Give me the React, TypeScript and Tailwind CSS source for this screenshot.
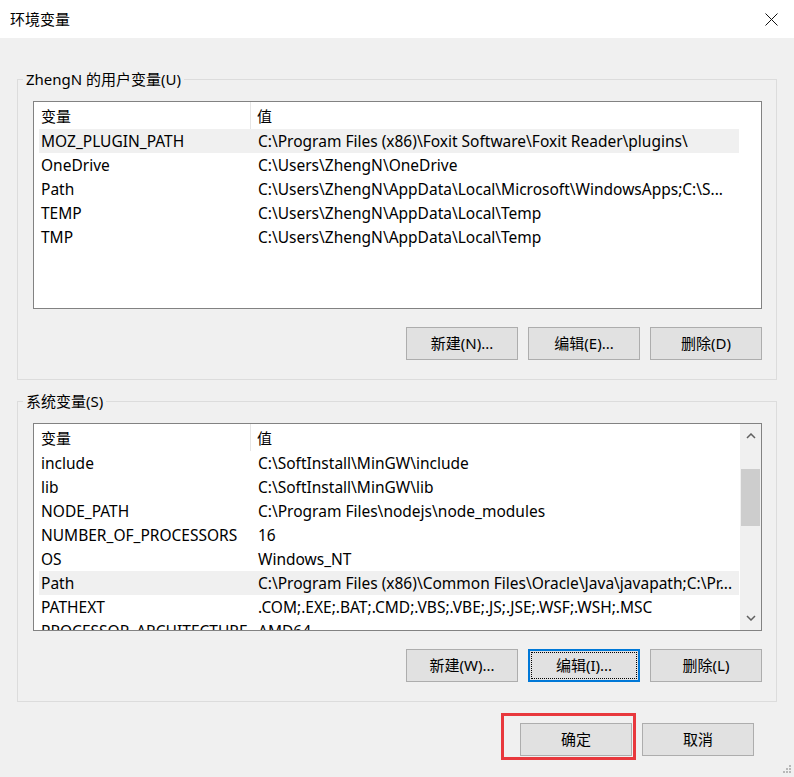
import React from 'react';

const font = { fontFamily: '"Noto Sans", "Noto Sans CJK SC", sans-serif' };

type Row = { name: string; value: string; selected?: boolean };

const userVars: Row[] = [
  { name: 'MOZ_PLUGIN_PATH', value: 'C:\\Program Files (x86)\\Foxit Software\\Foxit Reader\\plugins\\', selected: true },
  { name: 'OneDrive', value: 'C:\\Users\\ZhengN\\OneDrive' },
  { name: 'Path', value: 'C:\\Users\\ZhengN\\AppData\\Local\\Microsoft\\WindowsApps;C:\\S...' },
  { name: 'TEMP', value: 'C:\\Users\\ZhengN\\AppData\\Local\\Temp' },
  { name: 'TMP', value: 'C:\\Users\\ZhengN\\AppData\\Local\\Temp' },
];

const sysVars: Row[] = [
  { name: 'include', value: 'C:\\SoftInstall\\MinGW\\include' },
  { name: 'lib', value: 'C:\\SoftInstall\\MinGW\\lib' },
  { name: 'NODE_PATH', value: 'C:\\Program Files\\nodejs\\node_modules' },
  { name: 'NUMBER_OF_PROCESSORS', value: '16' },
  { name: 'OS', value: 'Windows_NT' },
  { name: 'Path', value: 'C:\\Program Files (x86)\\Common Files\\Oracle\\Java\\javapath;C:\\Pr...', selected: true },
  { name: 'PATHEXT', value: '.COM;.EXE;.BAT;.CMD;.VBS;.VBE;.JS;.JSE;.WSF;.WSH;.MSC' },
  { name: 'PROCESSOR_ARCHITECTURE', value: 'AMD64' },
];

function Button({ label, focused }: { label: string; focused?: boolean }) {
  return (
    <button
      className={`w-[112px] h-[33px] bg-[#e1e1e1] text-[15px] text-black flex items-center justify-center ${
        focused
          ? 'border-2 border-[#0078d7] outline-dotted outline-1 outline-black outline-offset-[-4px]'
          : 'border border-[#adadad]'
      }`}
    >
      {label}
    </button>
  );
}

function VarList({ rows, scroll }: { rows: Row[]; scroll?: boolean }) {
  return (
    <div className="h-[208px] border border-[#828282] bg-white flex overflow-hidden text-[15.5px]">
      <div className="flex-1 pl-[5px] overflow-hidden">
        <div className="flex h-[27px] w-[700px] items-center text-[15px]">
          <div className="w-[212px] h-full pl-[2px] pt-[2px] flex items-center border-r border-[#e5e5e5]">变量</div>
          <div className="pl-[6px] pt-[2px]">值</div>
        </div>
        {rows.map((r, i) => (
          <div key={i} className={`flex h-[24px] w-[700px] items-center whitespace-nowrap pt-[2px] ${r.selected ? 'bg-[#f0f0f0]' : ''}`}>
            <div className="w-[213px] pl-[2px] overflow-hidden">{r.name}</div>
            <div className="pl-[6px]">{r.value}</div>
          </div>
        ))}
      </div>
      {scroll && (
        <div className="w-[21px] bg-[#f0f0f0] flex flex-col items-center">
          <div className="h-[24px] flex items-center justify-center">
            <svg width="10" height="6" viewBox="0 0 10 6">
              <path d="M1 5 L5 1 L9 5" fill="none" stroke="#606060" strokeWidth="1.5" />
            </svg>
          </div>
          <div className="mt-[21px] w-[19px] h-[57px] bg-[#cdcdcd]" />
          <div className="flex-1" />
          <div className="h-[24px] flex items-center justify-center">
            <svg width="10" height="6" viewBox="0 0 10 6">
              <path d="M1 1 L5 5 L9 1" fill="none" stroke="#606060" strokeWidth="1.5" />
            </svg>
          </div>
        </div>
      )}
    </div>
  );
}

function Group({ title, children }: { title: string; children: React.ReactNode }) {
  return (
    <fieldset className="border border-[#dcdcdc] pl-[15px] pr-[14px] pt-[12px] pb-[19px]">
      <legend className="ml-[-10px] px-[3px] h-[20px] leading-[20px] text-[15px]">{title}</legend>
      {children}
    </fieldset>
  );
}

export default function App() {
  return (
    <div className="relative w-[794px] h-[777px] bg-[#f0f0f0] text-black text-[15px] overflow-hidden" style={font}>
      <div className="h-[38px] bg-white flex items-center justify-between pl-[10px] pr-[16px]">
        <span className="text-[15px]">环境变量</span>
        <svg width="13" height="13" viewBox="0 0 13 13">
          <path d="M0.5 0.5 L12.5 12.5 M12.5 0.5 L0.5 12.5" stroke="#111" strokeWidth="1" />
        </svg>
      </div>

      <div className="px-[17px] mt-[31px]">
        <Group title="ZhengN 的用户变量(U)">
          <VarList rows={userVars} />
          <div className="flex justify-end gap-[10px] mt-[18px]">
            <Button label="新建(N)..." />
            <Button label="编辑(E)..." />
            <Button label="删除(D)" />
          </div>
        </Group>

        <div className="mt-[11px]">
          <Group title="系统变量(S)">
            <VarList rows={sysVars} scroll />
            <div className="flex justify-end gap-[10px] mt-[18px]">
              <Button label="新建(W)..." />
              <Button label="编辑(I)..." focused />
              <Button label="删除(L)" />
            </div>
          </Group>
        </div>
      </div>

      <div className="flex justify-end items-start gap-[6px] pr-[40px] mt-[11px]">
        <div className="border-[3px] border-[#e8383d] pl-[16px] pr-[1px] pt-[7px] pb-[1px]">
          <Button label="确定" />
        </div>
        <div className="mt-[10px]">
          <Button label="取消" />
        </div>
      </div>

      <svg className="absolute right-[3px] bottom-[4px]" width="9" height="9" viewBox="0 0 9 9">
        <rect x="7" y="1" width="2" height="2" fill="#b8b8b8" />
        <rect x="4" y="4" width="2" height="2" fill="#b8b8b8" />
        <rect x="7" y="4" width="2" height="2" fill="#b8b8b8" />
        <rect x="1" y="7" width="2" height="2" fill="#b8b8b8" />
        <rect x="4" y="7" width="2" height="2" fill="#b8b8b8" />
        <rect x="7" y="7" width="2" height="2" fill="#b8b8b8" />
      </svg>
    </div>
  );
}
